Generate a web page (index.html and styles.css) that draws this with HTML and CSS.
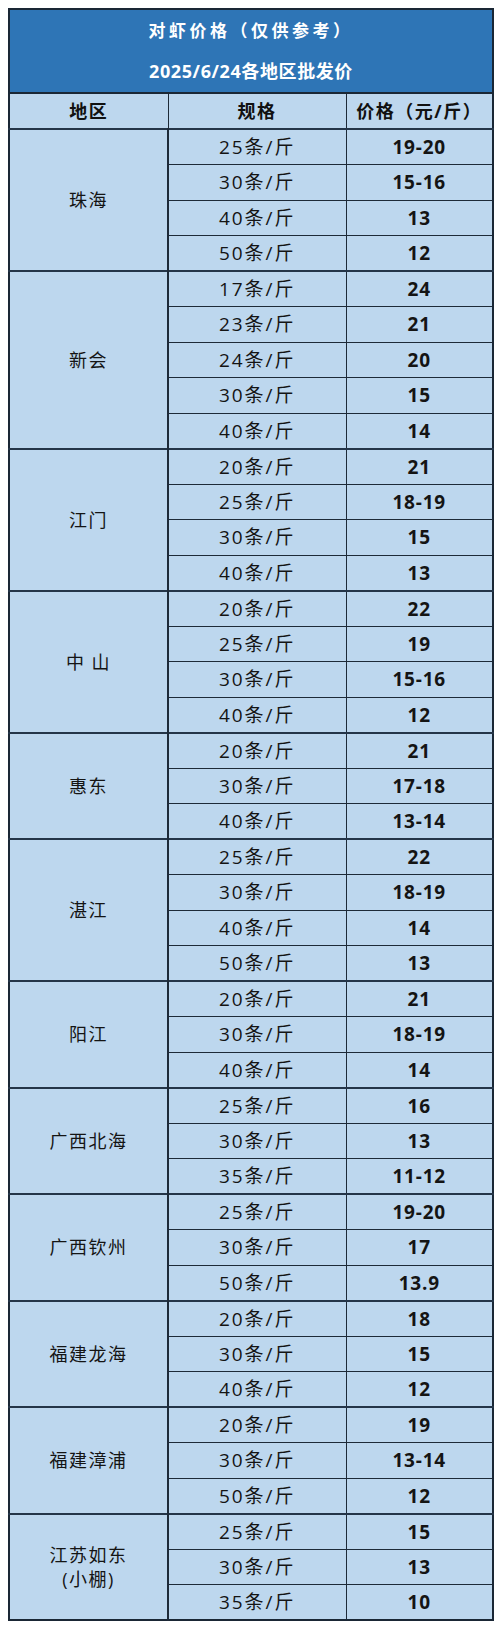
FILE: index.html
```html
<!DOCTYPE html>
<html lang="zh-CN">
<head>
<meta charset="utf-8">
<title>对虾价格</title>
<link rel="stylesheet" href="styles.css">
</head>
<body>
<table class="price">
  <colgroup>
    <col class="c1"><col class="c2"><col class="c3">
  </colgroup>
  <thead>
    <tr class="title"><th colspan="3"><div class="t1">对虾价格（仅供参考）</div><div class="t2">2025/6/24各地区批发价</div></th></tr>
    <tr class="head"><th>地区</th><th>规格</th><th>价格（元/斤）</th></tr>
  </thead>
  <tbody>
    <tr class="g"><td class="r" rowspan="4">珠海</td><td>25条/斤</td><td class="p">19-20</td></tr>
    <tr><td>30条/斤</td><td class="p">15-16</td></tr>
    <tr><td>40条/斤</td><td class="p">13</td></tr>
    <tr><td>50条/斤</td><td class="p">12</td></tr>

    <tr class="g"><td class="r" rowspan="5">新会</td><td>17条/斤</td><td class="p">24</td></tr>
    <tr><td>23条/斤</td><td class="p">21</td></tr>
    <tr><td>24条/斤</td><td class="p">20</td></tr>
    <tr><td>30条/斤</td><td class="p">15</td></tr>
    <tr><td>40条/斤</td><td class="p">14</td></tr>

    <tr class="g"><td class="r" rowspan="4">江门</td><td>20条/斤</td><td class="p">21</td></tr>
    <tr><td>25条/斤</td><td class="p">18-19</td></tr>
    <tr><td>30条/斤</td><td class="p">15</td></tr>
    <tr><td>40条/斤</td><td class="p">13</td></tr>

    <tr class="g"><td class="r" rowspan="4">中&nbsp;山</td><td>20条/斤</td><td class="p">22</td></tr>
    <tr><td>25条/斤</td><td class="p">19</td></tr>
    <tr><td>30条/斤</td><td class="p">15-16</td></tr>
    <tr><td>40条/斤</td><td class="p">12</td></tr>

    <tr class="g"><td class="r" rowspan="3">惠东</td><td>20条/斤</td><td class="p">21</td></tr>
    <tr><td>30条/斤</td><td class="p">17-18</td></tr>
    <tr><td>40条/斤</td><td class="p">13-14</td></tr>

    <tr class="g"><td class="r" rowspan="4">湛江</td><td>25条/斤</td><td class="p">22</td></tr>
    <tr><td>30条/斤</td><td class="p">18-19</td></tr>
    <tr><td>40条/斤</td><td class="p">14</td></tr>
    <tr><td>50条/斤</td><td class="p">13</td></tr>

    <tr class="g"><td class="r" rowspan="3">阳江</td><td>20条/斤</td><td class="p">21</td></tr>
    <tr><td>30条/斤</td><td class="p">18-19</td></tr>
    <tr><td>40条/斤</td><td class="p">14</td></tr>

    <tr class="g"><td class="r" rowspan="3">广西北海</td><td>25条/斤</td><td class="p">16</td></tr>
    <tr><td>30条/斤</td><td class="p">13</td></tr>
    <tr><td>35条/斤</td><td class="p">11-12</td></tr>

    <tr class="g"><td class="r" rowspan="3">广西钦州</td><td>25条/斤</td><td class="p">19-20</td></tr>
    <tr><td>30条/斤</td><td class="p">17</td></tr>
    <tr><td>50条/斤</td><td class="p">13.9</td></tr>

    <tr class="g"><td class="r" rowspan="3">福建龙海</td><td>20条/斤</td><td class="p">18</td></tr>
    <tr><td>30条/斤</td><td class="p">15</td></tr>
    <tr><td>40条/斤</td><td class="p">12</td></tr>

    <tr class="g"><td class="r" rowspan="3">福建漳浦</td><td>20条/斤</td><td class="p">19</td></tr>
    <tr><td>30条/斤</td><td class="p">13-14</td></tr>
    <tr><td>50条/斤</td><td class="p">12</td></tr>

    <tr class="g"><td class="r" rowspan="3">江苏如东<br>(小棚)</td><td>25条/斤</td><td class="p">15</td></tr>
    <tr><td>30条/斤</td><td class="p">13</td></tr>
    <tr><td>35条/斤</td><td class="p">10</td></tr>
  </tbody>
</table>
</body>
</html>
```

FILE: styles.css
```css
html, body {
  margin: 0;
  padding: 0;
  background: #ffffff;
}
body {
  padding: 8px;
  font-family: "Open Sans", "Noto Sans CJK SC", sans-serif;
  color: #141414;
}
.price {
  width: 484px;
  border-collapse: collapse;
  table-layout: fixed;
  border: 2px solid #1a2735;
}
.c1 { width: 159px; }
.c2 { width: 178px; }
.c3 { width: 147px; }

.price th, .price td {
  padding: 0;
  text-align: center;
  vertical-align: middle;
  border: 1px solid #1d2a38;
  background: #bdd7ee;
  font-size: 19px;
  letter-spacing: 2px;
  line-height: 24px;
}
.title th {
  background: #2e75b6;
  color: #ffffff;
  font-weight: bold;
  height: 82px;
  border-bottom: 2px solid #1a2735;
}
.title .t1 {
  font-size: 17px;
  letter-spacing: 3.5px;
  line-height: 24px;
  margin-bottom: 16px;
}
.title .t2 {
  font-size: 18px;
  letter-spacing: 0.6px;
  line-height: 24px;
}
.head th {
  font-weight: bold;
  font-size: 18px;
  letter-spacing: 1.5px;
  height: 34px;
  color: #111111;
}
.price tbody tr {
  height: 35.5px;
}
.price tbody tr.g td {
  border-top: 2px solid #243548;
}
.price td.r {
  font-size: 18px;
  letter-spacing: 1.5px;
  border-right: 2px solid #1d2a38;
}
.price td.p {
  font-weight: bold;
  letter-spacing: 0.8px;
}
```
